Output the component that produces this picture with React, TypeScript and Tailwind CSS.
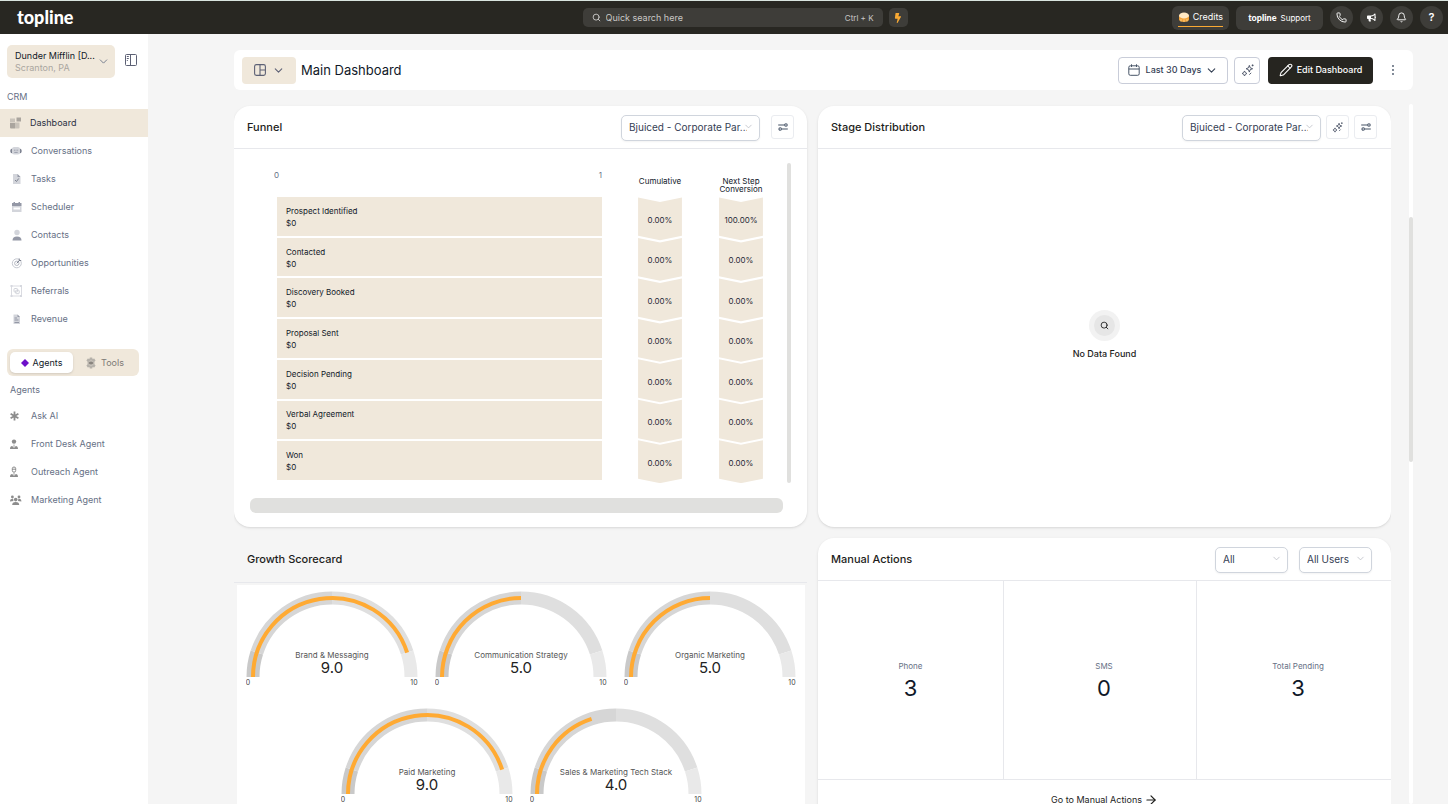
import { useState, type ReactNode } from "react";
import { ArrowRight, Bell, ChevronDown, Pencil, Phone, Search } from "lucide-react";
import { FaBolt, FaBullhorn } from "react-icons/fa";

const crmItems = [
  { label: "Dashboard", icon: <DashboardIcon /> },
  { label: "Conversations", icon: <ConversationsIcon /> },
  { label: "Tasks", icon: <TasksIcon /> },
  { label: "Scheduler", icon: <SchedulerIcon /> },
  { label: "Contacts", icon: <ContactsIcon /> },
  { label: "Opportunities", icon: <OpportunitiesIcon /> },
  { label: "Referrals", icon: <ReferralsIcon /> },
  { label: "Revenue", icon: <RevenueIcon /> },
];

const agentItems = [
  { label: "Ask AI", icon: <AsteriskIcon /> },
  { label: "Front Desk Agent", icon: <AgentIcon /> },
  { label: "Outreach Agent", icon: <AgentIcon outline /> },
  { label: "Marketing Agent", icon: <TeamIcon /> },
];

const stages = [
  "Prospect Identified",
  "Contacted",
  "Discovery Booked",
  "Proposal Sent",
  "Decision Pending",
  "Verbal Agreement",
  "Won",
];

const cumulative = ["0.00%", "0.00%", "0.00%", "0.00%", "0.00%", "0.00%", "0.00%"];
const nextStep = ["100.00%", "0.00%", "0.00%", "0.00%", "0.00%", "0.00%", "0.00%"];

const scores = [
  [
    { label: "Brand & Messaging", value: 9 },
    { label: "Communication Strategy", value: 5 },
    { label: "Organic Marketing", value: 5 },
  ],
  [
    { label: "Paid Marketing", value: 9 },
    { label: "Sales & Marketing Tech Stack", value: 4 },
  ],
];

const actions = [
  { label: "Phone", value: 3 },
  { label: "SMS", value: 0 },
  { label: "Total Pending", value: 3 },
];

/* ---------- Icons ---------- */

function DashboardIcon() {
  return (
    <svg viewBox="0 0 12 12" className="size-3">
      <path d="M0 1.5h5v4H0z" fill="#c9c3ba" />
      <path d="M6.5.5h4.5v4H6.5z" fill="#aaa59e" />
      <path d="M0 6h5v5.5H1a1 1 0 0 1-1-1z" fill="#aaa59e" />
      <path d="M5 5.5h4.500v5a1 1 0 0 1-1 1H5z" fill="#c9c3ba" />
    </svg>
  );
}

function ConversationsIcon() {
  return (
    <svg viewBox="0 0 12 12" className="size-3">
      <path d="M2 3.800C.6 4 .4 5 .4 6S.6 8 2 8.200zM10 3.800C11.400 4 11.600 5 11.600 6S11.400 8 10 8.200z" fill="#6b7080" />
      <rect x="1.800" y="2" width="8.400" height="7.600" rx="2.500" fill="#d3d5db" />
      <path d="M4 5.200h.9M5.600 5.200h.9M7.200 5.200h.9M4.300 7.400h3.400" stroke="#8b90a0" strokeWidth=".8" />
    </svg>
  );
}

function TasksIcon() {
  return (
    <svg viewBox="0 0 12 12" className="size-3">
      <path d="M3 1h4.500L10.500 4v7H3z" fill="#d3d5db" />
      <path d="M7.500 1 10.500 4h-3z" fill="#9498a6" />
      <path d="m5 7 1.500 1.500L8.700 5.500" fill="none" stroke="#7d8290" />
    </svg>
  );
}

function SchedulerIcon() {
  return (
    <svg viewBox="0 0 12 12" className="size-3">
      <path d="M2 5h9.500v6H2z" fill="#d3d5db" />
      <path d="M2 2h1.500V1H5v1h3.500V1H10v1h1.500v3H2z" fill="#9498a6" />
      <path d="M3.500 6.500H10v2H3.500z" fill="#fff" />
    </svg>
  );
}

function ContactsIcon() {
  return (
    <svg viewBox="0 0 12 12" className="size-3">
      <circle cx="7" cy="3.500" r="2.700" fill="#d3d5db" />
      <path d="M2.500 11.500c0-2.800 1.500-4 4.500-4s4.500 1.200 4.500 4z" fill="#9498a6" />
    </svg>
  );
}

function OpportunitiesIcon() {
  return (
    <svg viewBox="0 0 12 12" className="size-3" fill="none">
      <circle cx="6.800" cy="6.300" r="4.500" stroke="#c5c8d0" />
      <circle cx="6.800" cy="6.300" r="2.200" stroke="#b5b8c2" />
      <path d="M6.800 6.300 9.800 3M9.200 1.500v2h2" stroke="#7d8290" />
    </svg>
  );
}

function ReferralsIcon() {
  return (
    <svg viewBox="0 0 12 12" className="size-3" fill="none" stroke="#d0d2d9">
      <path d="M1.500 1h10v10h-10z" strokeWidth=".8" />
      <path d="M.5 0h2v2h-2zM10 0h2v2h-2zM.5 10h2v2h-2zM10 10h2v2h-2z" fill="#d6d8df" stroke="none" />
      <rect x="4" y="3.500" width="3.500" height="3.500" rx=".8" />
      <rect x="5.700" y="5.200" width="3.500" height="3.500" rx=".8" />
    </svg>
  );
}

function RevenueIcon() {
  return (
    <svg viewBox="0 0 12 12" className="size-3">
      <path d="M3.500 1.500h4L10 4v7H3.500z" fill="#d3d5db" />
      <path d="M7.500 1.500 10 4H7.500z" fill="#9498a6" />
      <path d="M4.500 5H7M4.500 7h4M4.500 9.500H9" stroke="#9498a6" strokeWidth="1.200" />
    </svg>
  );
}

function AsteriskIcon() {
  return (
    <svg viewBox="0 0 12 12" className="size-3">
      <path d="M4.500 1.500v9M.6 3.700l7.800 4.600M.6 8.300l7.800-4.600" stroke="#8c8c8c" strokeWidth="1.800" />
    </svg>
  );
}

function AgentIcon({ outline = false }: { outline?: boolean }) {
  return (
    <svg viewBox="0 0 12 12" className="size-3">
      {outline ? (
        <path d="M2.300 2.500a1.700 1.500 0 0 1 3.400 0v2a1.700 1.700 0 0 1-3.400 0zM2 3.200h4" fill="none" stroke="#8c8c8c" />
      ) : (
        <circle cx="4" cy="3.600" r="2.200" fill="#8c8c8c" />
      )}
      <path d="M0 11c0-2 .8-3 2.200-3L4 10l1.800-2C7.200 8 8 9 8 11z" fill="#8c8c8c" />
      <path d="M3.500 6.500h1V10h-1z" fill="#a5a5a5" />
    </svg>
  );
}

function TeamIcon() {
  return (
    <svg viewBox="0 0 12 12" className="size-3" fill="#8c8c8c">
      <circle cx="2.400" cy="3" r="1.400" />
      <circle cx="9" cy="3" r="1.400" />
      <circle cx="5.700" cy="5.600" r="1.800" />
      <path d="M0 7.500c0-2 1-2.700 3-2.700L3.500 7zM11.400 7.500c0-2-1-2.700-3-2.700L8 7zM2.200 11c0-2 1-3 3.500-3s3.500 1 3.500 3z" />
    </svg>
  );
}

function GearIcon() {
  return (
    <svg viewBox="0 0 12 12" className="size-3">
      <path
        d="M4.800.5h2.400l.4 1.600 1.600-.5 1.400 2-1.200 1.200v2.400l1.200 1.200-1.400 2-1.600-.5-.4 1.600H4.800l-.4-1.600-1.600.5-1.400-2 1.200-1.200V4.800L1.400 3.600l1.400-2 1.600.5z"
        fill="#b5b1aa"
      />
      <circle cx="6" cy="6" r="2.600" fill="#d6d0c7" />
      <path d="M6 4v4M4.300 5v2l3.400-2v2z" stroke="#77746f" strokeWidth=".8" fill="none" />
    </svg>
  );
}

function SidebarToggleIcon() {
  return (
    <svg viewBox="0 0 12 12" className="size-3" fill="none" stroke="#5d6175">
      <rect x=".5" y=".5" width="11" height="11" rx="1" />
      <path d="M5.500.5v11M1.800 2.500h2M1.800 4.500h2M1.800 6.500h1" />
    </svg>
  );
}

function LayoutIcon() {
  return (
    <svg viewBox="0 0 12 12" className="size-3" fill="none" stroke="#5d6175" strokeWidth="1.100">
      <rect x=".6" y=".6" width="10.800" height="10.800" rx="1.800" />
      <path d="M6 .6v10.800M6 6h5.400" />
    </svg>
  );
}

function SparklesIcon({ className }: { className: string }) {
  return (
    <svg viewBox="0 0 14 14" className={className} fill="none" stroke="#475063" strokeLinejoin="round">
      <path d="m9 1.500.9 2.600 2.600 1-2.600 1L9 8.700 8 6.100l-2.500-1 2.500-1z" />
      <path d="m3.800 7.500.9 1.800 1.700.9-1.700.9-.9 1.800-.9-1.800-1.700-.9 1.700-.9z" />
      <path d="M12.500.5v2M11.500 1.500h2M11 9.500l-2 2" />
    </svg>
  );
}

function SwitchesIcon() {
  return (
    <svg viewBox="0 0 12 10" className="h-[8px] w-[10px]" fill="none" stroke="#475467" strokeWidth="1.300">
      <path d="M0 2.500h8M4.500 7.500H12" />
      <circle cx="9.700" cy="2.500" r="1.600" />
      <circle cx="2.500" cy="7.500" r="1.600" />
    </svg>
  );
}

function CalendarIcon() {
  return (
    <svg viewBox="0 0 12 12" className="size-3" fill="none" stroke="#475467">
      <rect x=".8" y="1.800" width="10.400" height="9.500" rx="1.500" />
      <path d="M.8 5h10.400M3.500.3v2.700M8.500.3v2.700" />
    </svg>
  );
}

function CoinsIcon() {
  return (
    <svg viewBox="0 0 12 12" className="size-3">
      <path d="M1 4.500v4C1 10 3 11 6 11s5-1 5-2.500v-4z" fill="#f2a33a" />
      <ellipse cx="6" cy="4.500" rx="5" ry="3" fill="#ffe9c4" />
      <path d="M3 8v2.500M6 8.500V11M9 8v2.500" stroke="#ffd591" strokeWidth=".8" />
    </svg>
  );
}

/* ---------- Header ---------- */

function RoundButton({ label, children }: { label: string; children: ReactNode }) {
  return (
    <button aria-label={label} className="flex size-[23px] items-center justify-center rounded-full bg-[#3e3d39] text-white">
      {children}
    </button>
  );
}

function Header() {
  return (
    <header className="grid h-[34px] shrink-0 grid-cols-[1fr_auto_1fr] items-center border-t border-[#d9e4df] bg-[#282722] pr-[5px] pl-[17px]">
      <a href="#" className="pb-[2px] font-['Lato'] text-[18px] leading-5 font-black text-white">
        topline
      </a>
      <div className="ml-[30px] flex gap-[6px]">
        <label className="flex h-[19px] w-[300px] items-center rounded-[5px] bg-[#3e3d39] px-[9px] text-[#c9c8c6]">
          <Search className="size-[9px]" strokeWidth={2.5} />
          <input
            aria-label="Quick search"
            placeholder="Quick search here"
            className="ml-[5px] min-w-0 flex-1 bg-transparent text-[9px] outline-none placeholder:text-[#c9c8c6]"
          />
          <span className="text-[8px]">Ctrl + K</span>
        </label>
        <button aria-label="Quick actions" className="flex size-[19px] items-center justify-center rounded-[5px] bg-[#3e3d39]">
          <FaBolt className="size-[10px] text-[#f9a933]" />
        </button>
      </div>
      <div className="flex items-center justify-end gap-[7px]">
        <button className="flex h-6 items-center rounded-md bg-[#3e3d39] px-[6px] text-[9px] text-white">
          <span className="flex h-[18px] items-center gap-[3px] border-b border-[#f9a933]">
            <CoinsIcon />
            Credits
          </span>
        </button>
        <button className="flex h-6 w-[87px] items-center justify-center gap-1 rounded-md bg-[#3e3d39] text-[8px] text-white">
          <span className="font-['Lato'] text-[9px] font-black">topline</span>
          Support
        </button>
        <RoundButton label="Call">
          <Phone className="size-[11px]" />
        </RoundButton>
        <RoundButton label="Announcements">
          <FaBullhorn className="size-[9px]" />
        </RoundButton>
        <RoundButton label="Notifications">
          <Bell className="size-[11px]" />
        </RoundButton>
        <RoundButton label="Help">
          <span className="text-[11px] font-semibold">?</span>
        </RoundButton>
      </div>
    </header>
  );
}

/* ---------- Sidebar ---------- */

function NavItem({ label, icon, active }: { label: string; icon: ReactNode; active?: boolean }) {
  return (
    <li>
      <a
        href="#"
        className={`flex h-7 items-center pl-[10px] text-[9px] ${
          active ? "gap-2 bg-[#f0e8db] text-[#2b3042]" : "gap-[9px] text-[#667085]"
        }`}
      >
        {icon}
        {label}
      </a>
    </li>
  );
}

function Sidebar() {
  const [tab, setTab] = useState("Agents");

  return (
    <aside className="w-[148px] shrink-0 bg-white pt-[11px]">
      <div className="flex gap-[10px] px-[7px]">
        <button className="flex h-[33px] w-[108px] items-center justify-between rounded-[5px] bg-[#f0e8db] pr-[5px] pl-2 text-left">
          <span className="text-[9px] leading-3 whitespace-nowrap text-[#101828]">
            <span className="block">Dunder Mifflin [D...</span>
            <span className="block text-[#aaa6a0]">Scranton, PA</span>
          </span>
          <ChevronDown className="size-[13px] shrink-0 text-[#667085]" strokeWidth={1.6} />
        </button>
        <button aria-label="Toggle sidebar" className="mt-[9px] self-start">
          <SidebarToggleIcon />
        </button>
      </div>

      <h2 className="mt-3 px-[7px] text-[9px] leading-[14px] text-[#667085]">CRM</h2>
      <ul className="mt-[5px]">
        {crmItems.map((item, i) => (
          <NavItem key={item.label} {...item} active={i === 0} />
        ))}
      </ul>

      <div className="mx-[7px] mt-4 flex h-[27px] w-[132px] rounded-md bg-[#f0e8db] p-[3px] text-[9px]">
        {["Agents", "Tools"].map((name) => (
          <button
            key={name}
            onClick={() => setTab(name)}
            className={`flex flex-1 items-center justify-center gap-1 rounded-[5px] ${
              tab === name ? "bg-white text-[#101828] shadow-sm" : "text-[#7d7a76]"
            }`}
          >
            {name === "Agents" ? (
              <svg viewBox="0 0 8 8" className="size-2">
                <path d="M4 0 8 4 4 8 0 4z" fill="#6d0fc9" />
              </svg>
            ) : (
              <GearIcon />
            )}
            {name}
          </button>
        ))}
      </div>

      <h2 className="mt-[7px] px-[10px] text-[9px] leading-[14px] text-[#667085]">Agents</h2>
      <ul className="mt-[5px]">
        {agentItems.map((item) => (
          <NavItem key={item.label} {...item} />
        ))}
      </ul>
    </aside>
  );
}

/* ---------- Shared ---------- */

function Select({ label, options, className }: { label: string; options: string[]; className: string }) {
  return (
    <div className={`relative ${className}`}>
      <select
        aria-label={label}
        className="h-[26px] w-full appearance-none rounded-[5px] border border-[#d0d5dd] bg-white pr-3 pb-[2px] pl-[7px] text-[10px] text-[#344054] shadow-xs"
      >
        {options.map((option) => (
          <option key={option}>{option}</option>
        ))}
      </select>
      <ChevronDown className="pointer-events-none absolute top-2 right-[6px] size-[11px] text-[#b5b8c0]" strokeWidth={1.6} />
    </div>
  );
}

function IconButton({ label, children }: { label: string; children: ReactNode }) {
  return (
    <button aria-label={label} className="flex h-6 w-[23px] items-center justify-center rounded-[3px] border border-[#eaecf0] bg-white">
      {children}
    </button>
  );
}

function CardHeader({ title, className, children }: { title: string; className?: string; children?: ReactNode }) {
  return (
    <div className={`flex shrink-0 items-center border-b border-[#e7e8ec] pl-[13px] ${className ?? ""}`}>
      <h2 className="flex-1 text-[11px] font-medium text-[#1d1d1b]">{title}</h2>
      {children}
    </div>
  );
}

/* ---------- Widgets ---------- */

function ConversionColumn({ values }: { values: string[] }) {
  return (
    <svg viewBox="0 0 44 287" className="h-[287px] w-11">
      {values.map((value, i) => (
        <g key={i} transform={`translate(0 ${i * 40.6})`}>
          <path d="M0 .5 22 5 44 .5V39l-22 4.500L0 39z" fill="#f0e8db" />
          <text x="22" y="26" textAnchor="middle" fontSize="8" fill="#1f2937">
            {value}
          </text>
        </g>
      ))}
    </svg>
  );
}

function FunnelCard() {
  return (
    <section className="flex h-[421px] flex-col rounded-2xl bg-white shadow-sm">
      <CardHeader title="Funnel" className="h-[43px] gap-[11px] pr-[13px]">
        <Select label="Funnel pipeline" options={["Bjuiced - Corporate Par..."]} className="w-[139px]" />
        <IconButton label="Funnel settings">
          <SwitchesIcon />
        </IconButton>
      </CardHeader>

      <div className="mt-[14px] flex h-[320px] pr-4 pl-[43px] text-[8px] text-[#101828]">
        <div className="flex-1">
          <div className="-ml-[3px] flex h-[34px] justify-between pt-[6px] leading-3 text-[#667085]">
            <span>0</span>
            <span>1</span>
          </div>
          <ul className="flex h-[283px] flex-col gap-[2px]">
            {stages.map((stage) => (
              <li key={stage} className="flex flex-1 flex-col justify-center bg-[#f0e8db] pt-px pl-[9px] leading-3">
                <span>{stage}</span>
                <span>$0</span>
              </li>
            ))}
          </ul>
        </div>
        <div className="ml-9 flex w-11 flex-col items-center">
          <div className="h-[34px] pt-[14px] text-center leading-2 whitespace-nowrap">Cumulative</div>
          <ConversionColumn values={cumulative} />
        </div>
        <div className="ml-[37px] flex w-11 flex-col items-center">
          <div className="h-[34px] pt-[14px] text-center leading-2 whitespace-nowrap">
            Next Step
            <br />
            Conversion
          </div>
          <ConversionColumn values={nextStep} />
        </div>
        <div className="ml-6 w-1 rounded-full bg-[#e0e0de]" />
      </div>
      <div className="mt-[15px] mr-6 ml-4 h-[15px] rounded-md bg-[#e0e0de]" />
    </section>
  );
}

function StageCard() {
  return (
    <section className="flex h-[421px] flex-col rounded-2xl bg-white shadow-sm">
      <CardHeader title="Stage Distribution" className="h-[43px] gap-[5px] pr-[14px]">
        <Select label="Stage pipeline" options={["Bjuiced - Corporate Par..."]} className="w-[139px]" />
        <IconButton label="Ask AI about stages">
          <SparklesIcon className="size-[11px]" />
        </IconButton>
        <IconButton label="Stage settings">
          <SwitchesIcon />
        </IconButton>
      </CardHeader>
      <div className="flex flex-1 flex-col items-center justify-center gap-[5px] pb-[5px]">
        <div className="flex size-[31px] items-center justify-center rounded-full bg-[#f2f2f2]">
          <div className="flex size-[21px] items-center justify-center rounded-full bg-[#e6e6e6]">
            <Search className="size-[9px]" />
          </div>
        </div>
        <p className="text-[9px] leading-4 font-medium text-[#1d1d1b]">No Data Found</p>
      </div>
    </section>
  );
}

function point(value: number, radius: number) {
  const angle = Math.PI * (1 - value / 10);
  return `${86 + radius * Math.cos(angle)} ${86 - radius * Math.sin(angle)}`;
}

function arc(from: number, to: number, radius: number) {
  return `M${point(from, radius)}A${radius} ${radius} 0 0 1 ${point(to, radius)}`;
}

function Gauge({ label, value }: { label: string; value: number }) {
  return (
    <svg viewBox="0 0 172 100" className="h-[100px] w-[172px]" fill="none" strokeWidth="13">
      <path d={arc(0, 1, 79)} stroke="#c9c9c9" />
      <path d={arc(1, 5, 79)} stroke="#d6d6d6" />
      <path d={arc(5, 9, 79)} stroke="#dfdfdf" />
      <path d={arc(9, 10, 79)} stroke="#e9e9e9" />
      <path d={arc(0, value, 79)} stroke="#ffaa33" strokeWidth="4" />
      <g textAnchor="middle" stroke="none">
        <text x="86" y="67" fontSize="8" fill="#555">
          {label}
        </text>
        <text x="86" y="82" fontSize="15" fill="#222">
          {value.toFixed(1)}
        </text>
        <text x="2" y="94" fontSize="7" fill="#444">
          0
        </text>
        <text x="168" y="94" fontSize="7" fill="#444">
          10
        </text>
      </g>
    </svg>
  );
}

function ScorecardCard() {
  return (
    <section>
      <CardHeader title="Growth Scorecard" className="h-[45px] pb-[2px]" />
      <div className="mt-[2px] mr-[2px] ml-[3px] flex h-[260px] flex-col gap-[17px] bg-white pt-[6px]">
        {scores.map((row, i) => (
          <div key={i} className="flex justify-center gap-[17px]">
            {row.map((score) => (
              <Gauge key={score.label} {...score} />
            ))}
          </div>
        ))}
      </div>
    </section>
  );
}

function ManualActionsCard() {
  return (
    <section className="rounded-t-2xl bg-white shadow-sm">
      <CardHeader title="Manual Actions" className="h-[43px] gap-[11px] pr-[19px]">
        <Select label="Action type" options={["All"]} className="w-[73px]" />
        <Select label="Users" options={["All Users"]} className="w-[73px]" />
      </CardHeader>
      <dl className="grid h-[199px] grid-cols-[186fr_193fr_194fr] divide-x divide-[#e7e8ec] border-b border-[#e7e8ec] text-center">
        {actions.map((action, i) => (
          <div key={action.label} className={`flex flex-col justify-center pt-1 ${i > 0 ? "pl-2" : ""}`}>
            <dt className="text-[8px] leading-3 text-[#667085]">{action.label}</dt>
            <dd className="text-[22px] leading-8 text-[#101828]">{action.value}</dd>
          </div>
        ))}
      </dl>
      <a href="#" className="flex h-10 items-center justify-center gap-[2px] text-[9px] leading-3 text-[#1d1d1b]">
        Go to Manual Actions
        <ArrowRight className="size-[14px]" />
      </a>
    </section>
  );
}

function Toolbar() {
  return (
    <div className="flex h-10 shrink-0 items-center rounded-md bg-white px-2 text-[9px]">
      <button aria-label="Choose dashboard" className="flex h-[27px] w-[54px] items-center justify-center gap-[6px] rounded bg-[#f0e8db] text-[#5d6175]">
        <LayoutIcon />
        <ChevronDown className="size-[13px]" />
      </button>
      <h1 className="ml-[5px] flex-1 pt-px text-[13px] text-[#101828]">Main Dashboard</h1>
      <button className="flex h-[27px] w-[110px] items-center justify-center gap-1 rounded border border-[#c9cdd9] font-medium text-[#344054]">
        <CalendarIcon />
        <span className="ml-[2px]">Last 30 Days</span>
        <ChevronDown className="size-[13px]" />
      </button>
      <button aria-label="Ask AI" className="ml-[6px] flex h-[27px] w-[26px] items-center justify-center rounded border border-[#c9cdd9]">
        <SparklesIcon className="size-[13px]" />
      </button>
      <button className="ml-2 flex h-[27px] w-[105px] items-center justify-center gap-1 rounded bg-[#262520] font-medium text-white">
        <Pencil className="size-[14px]" strokeWidth={1.8} />
        Edit Dashboard
      </button>
      <button aria-label="More options" className="ml-2 flex size-6 items-center justify-center">
        <svg viewBox="0 0 4 12" className="h-3 w-1" fill="#475467">
          <circle cx="2" cy="2" r=".9" />
          <circle cx="2" cy="6" r=".9" />
          <circle cx="2" cy="10" r=".9" />
        </svg>
      </button>
    </div>
  );
}

export default function App() {
  return (
    <div className="flex h-screen flex-col overflow-hidden bg-[#f5f5f5] font-['Inter',sans-serif]">
      <Header />
      <div className="flex min-h-0 flex-1">
        <Sidebar />
        <main className="flex min-w-0 flex-1 flex-col pt-4 pr-[35px] pl-[86px]">
          <Toolbar />
          <div className="mt-[14px] flex min-h-0 flex-1 gap-[18px] overflow-hidden">
            {/* Widgets */}
            <div className="-ml-1 grid flex-1 grid-cols-2 content-start gap-[11px] overflow-hidden pt-[2px] pl-1">
              <FunnelCard />
              <StageCard />
              <ScorecardCard />
              <ManualActionsCard />
            </div>
            {/* Scrollbar */}
            <div className="w-1 rounded-full bg-white pt-[113px]">
              <div className="h-[245px] rounded-full bg-[#e0e0de]" />
            </div>
          </div>
        </main>
      </div>
    </div>
  );
}
